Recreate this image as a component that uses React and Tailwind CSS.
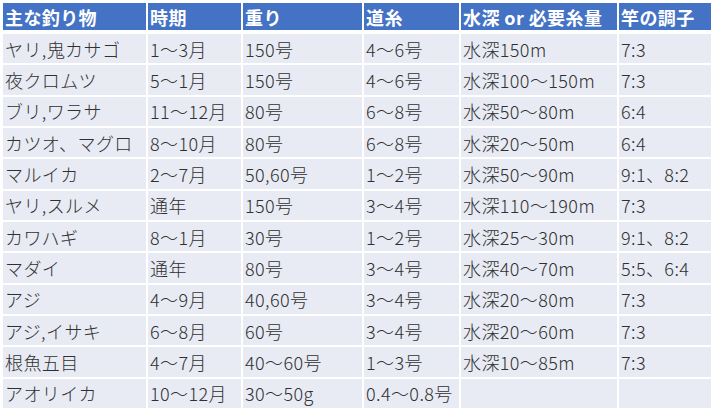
import React from "react";

const headers = ["主な釣り物", "時期", "重り", "道糸", "水深 or 必要糸量", "竿の調子"];

const rows = [
  ["ヤリ,鬼カサゴ", "1～3月", "150号", "4～6号", "水深150m", "7:3"],
  ["夜クロムツ", "5～1月", "150号", "4～6号", "水深100～150m", "7:3"],
  ["ブリ,ワラサ", "11～12月", "80号", "6～8号", "水深50～80m", "6:4"],
  ["カツオ、マグロ", "8～10月", "80号", "6～8号", "水深20～50m", "6:4"],
  ["マルイカ", "2～7月", "50,60号", "1～2号", "水深50～90m", "9:1、8:2"],
  ["ヤリ,スルメ", "通年", "150号", "3～4号", "水深110～190m", "7:3"],
  ["カワハギ", "8～1月", "30号", "1～2号", "水深25～30m", "9:1、8:2"],
  ["マダイ", "通年", "80号", "3～4号", "水深40～70m", "5:5、6:4"],
  ["アジ", "4～9月", "40,60号", "3～4号", "水深20～80m", "7:3"],
  ["アジ,イサキ", "6～8月", "60号", "3～4号", "水深20～60m", "7:3"],
  ["根魚五目", "4～7月", "40～60号", "1～3号", "水深10～85m", "7:3"],
  ["アオリイカ", "10～12月", "30～50g", "0.4～0.8号", "", ""],
];

export default function App() {
  return (
    <div
      className="w-[718px] h-[416px] bg-white pt-[3px] pl-[3px] overflow-hidden"
      style={{ fontFamily: '"Noto Sans CJK JP", "Noto Sans", sans-serif' }}
    >
      <div className="grid grid-cols-[143px_93px_119px_95px_156px_92px] gap-x-[2px] h-[27px]">
        {headers.map((h, i) => (
          <div
            key={i}
            className="bg-[#4472C4] text-white font-bold text-[18px] tracking-[0.4px] leading-none flex items-center pl-[2px] whitespace-nowrap"
          >
            {h}
          </div>
        ))}
      </div>
      <div className="mt-[4px] grid grid-cols-[143px_93px_119px_95px_156px_92px] auto-rows-[29.33px] gap-[2px]">
        {rows.map((r, ri) =>
          r.map((c, ci) => (
            <div
              key={ri + "-" + ci}
              className="bg-[#E8EBF4] text-[#303030] font-light text-[18px] tracking-[0.4px] leading-none flex items-center pl-[2px] whitespace-nowrap"
            >
              {c}
            </div>
          ))
        )}
      </div>
    </div>
  );
}
